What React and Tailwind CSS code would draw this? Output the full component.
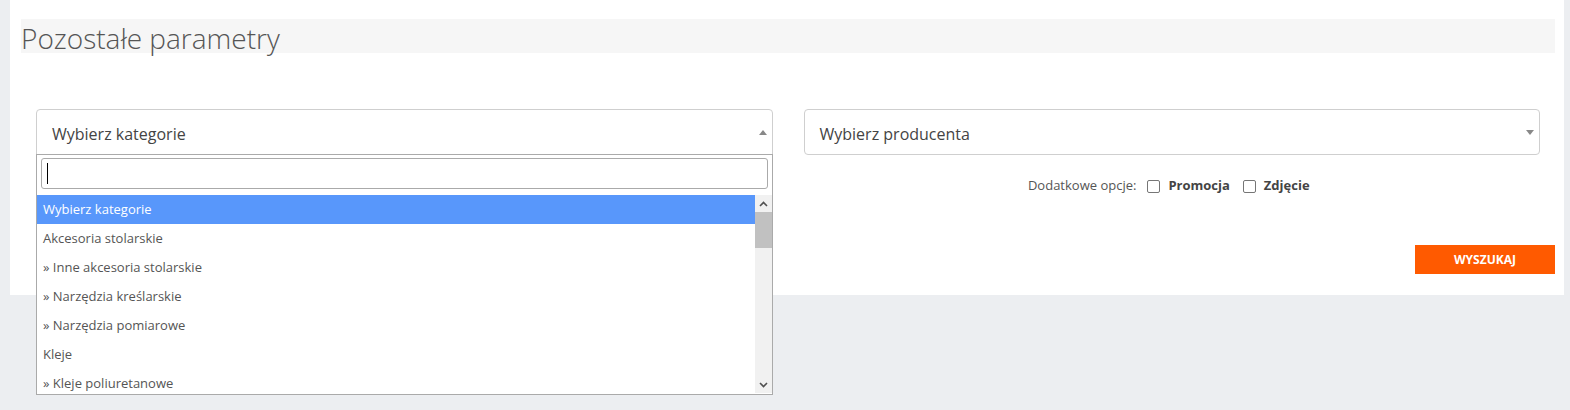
const categories = [
  'Wybierz kategorie',
  'Akcesoria stolarskie',
  '» Inne akcesoria stolarskie',
  '» Narzędzia kreślarskie',
  '» Narzędzia pomiarowe',
  'Kleje',
  '» Kleje poliuretanowe',
];

function Caret({ up }) {
  return (
    <svg width="8" height="5" viewBox="0 0 8 5" className="shrink-0">
      {up ? <polygon points="0,5 8,5 4,0" fill="#888" /> : <polygon points="0,0 8,0 4,5" fill="#888" />}
    </svg>
  );
}

function Chevron({ up }) {
  return (
    <svg width="9" height="6" viewBox="0 0 9 6">
      <polyline
        points={up ? '1,5 4.5,1.5 8,5' : '1,1 4.5,4.5 8,1'}
        fill="none"
        stroke="#505050"
        strokeWidth="1.6"
      />
    </svg>
  );
}

function CategorySelect() {
  return (
    <div className="relative">
      <div className="flex h-[46px] items-center justify-between rounded-t-[4px] border border-[#cfcfcf] bg-white pl-[15px] pr-[5px]">
        <span className="pt-[3px] text-[16px] text-[#444]">Wybierz kategorie</span>
        <Caret up />
      </div>
      <div className="absolute left-0 right-0 top-[45px] z-10 h-[241px] border border-[#aaa] bg-white">
        <div className="px-[4px] pb-[6px] pt-[3px]">
          <div className="flex h-[31px] items-center rounded-[3px] border border-[#aaa] bg-white pl-[5px]">
            <div className="h-[21px] w-px bg-black" />
          </div>
        </div>
        <div className="flex h-[198px]">
          <div className="flex-1 overflow-hidden">
            {categories.map((c, i) => (
              <div
                key={c}
                className={
                  i === 0
                    ? 'flex h-[29px] items-center bg-[#5897fb] pl-[6px] text-[13px] text-white'
                    : 'flex h-[29px] items-center pl-[6px] text-[13px] text-[#555]'
                }
              >
                {c}
              </div>
            ))}
          </div>
          <div className="flex w-[17px] flex-col bg-[#f1f1f1]">
            <div className="flex h-[17px] items-center justify-center">
              <Chevron up />
            </div>
            <div className="h-[36px] bg-[#c1c1c1]" />
            <div className="flex-1" />
            <div className="flex h-[17px] items-center justify-center">
              <Chevron />
            </div>
          </div>
        </div>
      </div>
    </div>
  );
}

function Checkbox({ label }) {
  return (
    <label className="flex items-center gap-[8px]">
      <span className="h-[13px] w-[13px] rounded-[2px] border border-[#767676] bg-white" />
      <span className="font-bold text-[#444]">{label}</span>
    </label>
  );
}

export default function App() {
  return (
    <div className="h-[410px] bg-[#eceef1] font-['Open_Sans',sans-serif]">
      <div className="ml-[10px] w-[1554px] bg-white pb-[21px] pl-[11px] pr-[9px] pt-[19px]">
        <div className="h-[34px] bg-[#f6f6f6]">
          <h2 className="text-[28px] font-light leading-[38px] text-[#555]">Pozostałe parametry</h2>
        </div>
        <div className="mt-[56px] grid grid-cols-2 items-start gap-[31px] px-[15px]">
          <CategorySelect />
          <div>
            <div className="flex h-[46px] items-center justify-between rounded-[4px] border border-[#cfcfcf] bg-white pl-[15px] pr-[5px]">
              <span className="pt-[3px] text-[16px] text-[#444]">Wybierz producenta</span>
              <Caret />
            </div>
            <div className="mt-[21px] flex h-[20px] items-center justify-center gap-[13px] pr-[6px] text-[13px] text-[#555]">
              <span className="mr-[-2px]">Dodatkowe opcje:</span>
              <Checkbox label="Promocja" />
              <Checkbox label="Zdjęcie" />
            </div>
          </div>
        </div>
        <div className="mt-[49px] flex justify-end">
          <button className="h-[29px] w-[140px] bg-[#ff5a00] text-[12px] font-bold text-white">WYSZUKAJ</button>
        </div>
      </div>
    </div>
  );
}
